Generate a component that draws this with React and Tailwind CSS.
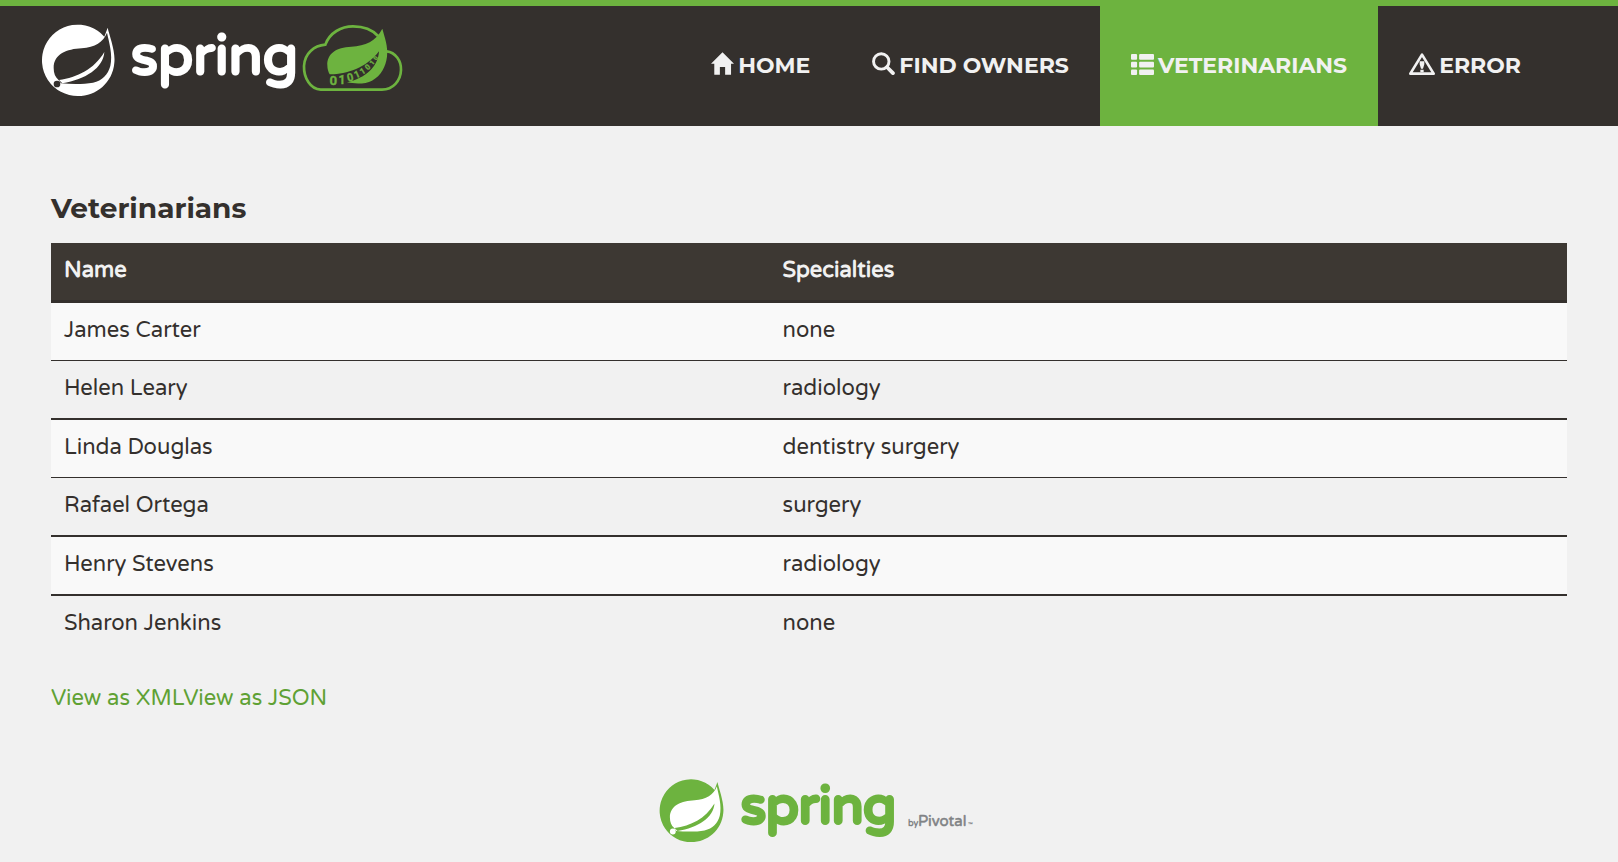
const vets = [
  { name: 'James Carter', specialties: 'none', cell: 'bg-[#f9f9f9] border-b' },
  { name: 'Helen Leary', specialties: 'radiology', cell: 'border-b-2' },
  { name: 'Linda Douglas', specialties: 'dentistry surgery', cell: 'bg-[#f9f9f9] border-b' },
  { name: 'Rafael Ortega', specialties: 'surgery', cell: 'border-b-2' },
  { name: 'Henry Stevens', specialties: 'radiology', cell: 'bg-[#f9f9f9] border-b-2' },
  { name: 'Sharon Jenkins', specialties: 'none', cell: '' },
];

function HomeIcon() {
  return (
    <svg className="h-[23px] w-[23px]" viewBox="0 0 70 68" fill="currentColor" aria-hidden="true">
      <path d="M35 0L70 35H61V68H43V45H27V68H10V35H0Z" />
    </svg>
  );
}

function SearchIcon() {
  return (
    <svg className="h-[23px] w-[23px]" viewBox="0 0 67 66" fill="none" stroke="currentColor" aria-hidden="true">
      <circle cx="27" cy="27" r="22.5" strokeWidth="8.5" />
      <path d="M44 44L61 61" strokeWidth="11" strokeLinecap="round" />
    </svg>
  );
}

function ListIcon() {
  return (
    <svg className="h-[21px] w-[23px]" viewBox="0 0 68 62" fill="currentColor" aria-hidden="true">
      <rect x="0" y="0" width="18" height="17" rx="3" />
      <rect x="24" y="0" width="44" height="17" rx="3" />
      <rect x="0" y="23" width="18" height="17" rx="3" />
      <rect x="24" y="23" width="44" height="17" rx="3" />
      <rect x="0" y="46" width="18" height="16" rx="3" />
      <rect x="24" y="46" width="44" height="16" rx="3" />
    </svg>
  );
}

function WarningIcon() {
  return (
    <svg className="h-[22px] w-[26px]" viewBox="0 0 78 66" fill="currentColor" aria-hidden="true">
      <path
        d="M39 5L74 62H4Z"
        fill="none"
        stroke="currentColor"
        strokeWidth="8"
        strokeLinejoin="round"
      />
      <path d="M32 25H46V34L42 47H36L32 34ZM34 50H44V58H34Z" />
    </svg>
  );
}

function Emblem({ disc, leaf }) {
  return (
    <g>
      <path
        fill={disc}
        d="M196 44L206 17C211 40 230 88 226 122C221 182 172 222 117 222A107 107 0 1 1 196 44Z"
      />
      <path
        fill={leaf}
        d="M204 32C193 60 168 76 128 79C84 81 44 96 44 138C44 154 49 166 58 173L66 184C100 187 135 187 162 182C190 176 207 158 214 132C222 98 210 60 204 32Z"
      />
      <path fill={disc} d="M60 174C115 166 165 142 196 90C193 138 140 172 70 184Z" />
      <circle cx="54" cy="186" r="10" fill={leaf} />
    </g>
  );
}

function SpringCloudLogo() {
  return (
    <svg className="h-[72px] w-[360px] overflow-visible" viewBox="0 0 360 72" role="img" aria-label="Spring Cloud">
      <g transform="translate(-4 -2) scale(.33333)">
        <Emblem disc="#ffffff" leaf="#34302d" />
      </g>
      <text
        x="88"
        y="50"
        fill="#ffffff"
        stroke="#ffffff"
        strokeWidth="3"
        strokeLinejoin="round"
        className="font-['Varela_Round','Roboto',sans-serif] text-[56px]"
      >
        spring
      </text>
      <g transform="translate(255 -4) scale(.33333)" fill="#6db33f">
        <path
          fill="none"
          stroke="#6db33f"
          strokeWidth="8"
          d="M240 48C222 28 196 19 165 19C130 19 95 38 82 74C48 77 20 100 18 138C17 175 38 208 68 209H252C285 209 308 182 309 150C310 122 292 97 266 94"
        />
        <path d="M253 26C234 64 202 77 160 80C114 82 87 101 88 136C88 148 91 156 95 163C142 164 205 145 243 94C241 140 202 175 147 187C170 192 202 193 222 182C250 166 263 140 267 110C271 80 260 52 253 26Z" />
        <g className="font-['Roboto',sans-serif] font-bold" stroke="#6db33f" textAnchor="middle">
          <text x="106" y="194" fontSize="40">0</text>
          <text x="132" y="191" fontSize="36">1</text>
          <text transform="translate(159 183) rotate(-14)" fontSize="33">0</text>
          <text transform="translate(181 172) rotate(-24)" fontSize="29">1</text>
          <text transform="translate(198 161) rotate(-32)" fontSize="26">1</text>
          <text transform="translate(214 147) rotate(-42)" fontSize="23">0</text>
          <text transform="translate(227 132) rotate(-50)" fontSize="20">1</text>
          <text transform="translate(238 117) rotate(-60)" fontSize="17">0</text>
        </g>
      </g>
    </svg>
  );
}

function SpringPivotalLogo() {
  return (
    <svg className="h-[64px] w-[314px] overflow-visible" viewBox="0 0 314 64" role="img" aria-label="Spring by Pivotal">
      <g transform="translate(-3 -2) scale(.2933)">
        <Emblem disc="#6db33f" leaf="#ffffff" />
      </g>
      <text
        x="81"
        y="44"
        fill="#6db33f"
        stroke="#6db33f"
        strokeWidth="4"
        strokeLinejoin="round"
        className="font-['Varela_Round','Roboto',sans-serif] text-[52px]"
      >
        spring
      </text>
      <g fill="#808285" className="font-['Varela_Round','Lato',sans-serif]">
        <text x="248" y="47" className="text-[9px] font-bold">by</text>
        <text x="258" y="47" stroke="#808285" strokeWidth=".5" className="text-[15px]">Pivotal</text>
        <text x="308" y="47" className="text-[5px] font-bold">™</text>
      </g>
    </svg>
  );
}

const links = [
  { label: 'HOME', Icon: HomeIcon },
  { label: 'FIND OWNERS', Icon: SearchIcon },
  { label: 'VETERINARIANS', Icon: ListIcon, active: true },
  { label: 'ERROR', Icon: WarningIcon },
];

export default function App() {
  return (
    <div className="min-h-screen bg-[#f1f1f1] font-['Varela_Round','Inter',sans-serif] text-[22px] leading-8 text-[#34302d]">
      <header className="flex h-[126px] justify-between border-t-[6px] border-[#6db33f] bg-[#34302d] pr-[66px] pl-[43px]">
        <a href="#home" className="mt-[18px]">
          <SpringCloudLogo />
        </a>
        <nav className="flex">
          {links.map(({ label, Icon, active }) => (
            <a
              key={label}
              href="#"
              aria-current={active ? 'page' : undefined}
              className={`flex items-start gap-1 px-[31px] pt-11 font-["Montserrat","Inter",sans-serif] font-bold text-[#f1f1f1] ${active ? 'bg-[#6db33f]' : ''}`}
            >
              <span className="flex h-[25px] items-end">
                <Icon />
              </span>
              {label}
            </a>
          ))}
        </nav>
      </header>

      <main className="px-[51px] pt-16">
        <h2 className="font-['Montserrat','Inter',sans-serif] text-[28px] leading-9 font-bold">Veterinarians</h2>
        <table className="mt-[17px] w-full table-fixed border-separate border-spacing-0 text-left">
          <colgroup>
            <col className="w-[47.4%]" />
            <col />
          </colgroup>
          <thead className="bg-[#3d3833] text-[#f1f1f1]">
            <tr>
              <th className="border-b-[3px] border-[#34302d] px-[13px] pt-[11px] pb-3.5 font-bold">Name</th>
              <th className="border-b-[3px] border-[#34302d] px-[13px] pt-[11px] pb-3.5 font-bold">Specialties</th>
            </tr>
          </thead>
          <tbody>
            {vets.map((vet) => (
              <tr key={vet.name}>
                <td className={`border-[#34302d] px-[13px] pt-[11px] pb-3.5 ${vet.cell}`}>{vet.name}</td>
                <td className={`border-[#34302d] px-[13px] pt-[11px] pb-3.5 ${vet.cell}`}>{vet.specialties}</td>
              </tr>
            ))}
          </tbody>
        </table>
        <p className="mt-[29px] text-[#5fa134]">
          <a href="#xml">View as XML</a>
          <a href="#json">View as JSON</a>
        </p>
      </main>

      <footer className="mt-[65px] flex justify-center pl-4">
        <SpringPivotalLogo />
      </footer>
    </div>
  );
}
